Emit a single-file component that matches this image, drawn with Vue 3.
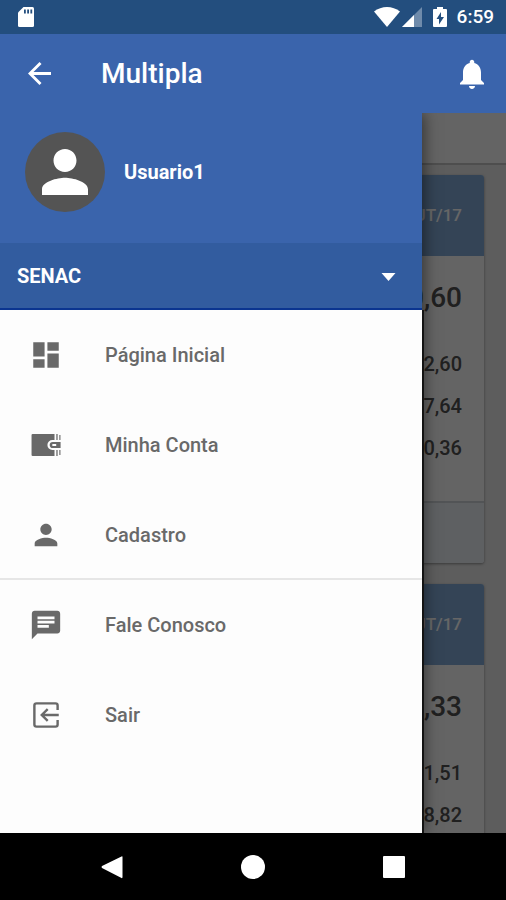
<script setup>
import { ref } from 'vue';

const company = ref('SENAC');
const companies = ['SENAC'];

// main options and, below the divider, the secondary ones
const groups = [
  [
    { label: 'Página Inicial', icon: 'dashboard' },
    { label: 'Minha Conta', icon: 'wallet' },
    { label: 'Cadastro', icon: 'person' }
  ],
  [
    { label: 'Fale Conosco', icon: 'chat' },
    { label: 'Sair', icon: 'exit' }
  ]
];

const cards = [
  { month: 'OUT/17', total: '0,60', values: ['2,60', '97,64', '00,36'] },
  { month: 'OUT/17', total: '0,33', values: ['1,51', '8,82'] }
];
</script>

<template>
  <div class="app">
    <div class="status-bar">
      <svg class="sd" viewBox="0 0 16 20" aria-hidden="true">
        <path fill="#fff" d="M5.500 0H14.500Q16 0 16 1.500V18.500Q16 20 14.500 20H1.500Q0 20 0 18.500V5.500Z" />
        <path fill="#234e7e" d="M6 2.500h1.800v4H6zM9.200 2.500H11v4H9.200zM12.400 2.500h1.800v4h-1.800z" />
      </svg>
      <div class="status-icons">
        <svg class="wifi" viewBox="0 0 26 20" aria-hidden="true">
          <path fill="#fff" d="M0 4.500C7.500-1.500 18.500-1.500 26 4.500L13 20Z" />
        </svg>
        <svg class="signal" viewBox="0 0 20 20" aria-hidden="true">
          <path fill="#fff" fill-opacity="0.35" d="M0 20L20 0V20Z" />
          <path fill="#fff" d="M0 20L12 8V20Z" />
        </svg>
        <svg class="battery" viewBox="0 0 14 20" aria-hidden="true">
          <path fill="#fff" d="M4 0h6v2h3q1 0 1 1v16q0 1-1 1H1q-1 0-1-1V3q0-1 1-1h3z" />
          <path fill="#234e7e" d="M8 5v5h3l-5 7.500V12H3.500z" />
        </svg>
        <span class="clock">6:59</span>
      </div>
    </div>

    <header class="toolbar">
      <button type="button" class="icon-button" aria-label="Voltar">
        <svg class="icon back" viewBox="4 4 16 16"><path d="M20 11H7.830l5.590-5.590L12 4l-8 8 8 8 1.410-1.410L7.830 13H20v-2z" /></svg>
      </button>
      <h1>Multipla</h1>
      <button type="button" class="icon-button" aria-label="Notificações">
        <svg class="icon bell" viewBox="0 0 24 24"><path d="M12 22c1.100 0 2-.9 2-2h-4c0 1.100.89 2 2 2zm6-6v-5c0-3.070-1.640-5.640-4.500-6.320V4c0-.83-.67-1.500-1.500-1.500s-1.500.67-1.500 1.500v.68C7.630 5.360 6 7.920 6 11v5l-2 2v1h16v-1l-2-2z" /></svg>
      </button>
    </header>

    <div class="content">
      <main class="page">
        <div class="tabs"></div>
        <section class="cards">
          <article v-for="(card, i) in cards" :key="i" class="card">
            <h2>{{ card.month }}</h2>
            <div class="card-body">
              <p class="total">{{ card.total }}</p>
              <p v-for="value in card.values" :key="value" class="value">{{ value }}</p>
            </div>
            <div class="card-footer"></div>
          </article>
        </section>
      </main>

      <div class="scrim"></div>

      <aside class="drawer">
        <div class="user">
          <span class="avatar">
            <svg viewBox="4 4 16 16" aria-hidden="true"><path d="M12 12c2.210 0 4-1.790 4-4s-1.790-4-4-4-4 1.790-4 4 1.790 4 4 4zm0 2c-2.670 0-8 1.340-8 4v2h16v-2c0-2.660-5.330-4-8-4z" /></svg>
          </span>
          <span class="user-name">Usuario1</span>
        </div>
        <div class="company">
          <select v-model="company" aria-label="Empresa">
            <option v-for="item in companies" :key="item">{{ item }}</option>
          </select>
          <svg class="caret" viewBox="0 0 14 8" aria-hidden="true"><path d="M0 0h14L7 8z" /></svg>
        </div>
        <nav class="menu">
          <ul v-for="(items, g) in groups" :key="g">
            <li v-for="item in items" :key="item.label">
              <a href="#">
                <svg class="icon" viewBox="0 0 24 24" aria-hidden="true">
                  <path v-if="item.icon === 'dashboard'" d="M3 13h8V3H3v10zm0 8h8v-6H3v6zm10 0h8V11h-8v10zm0-18v6h8V3h-8z" />
                  <g v-else-if="item.icon === 'wallet'">
                    <path d="M2.600 4.200H18V8.500H16.500a3.500 3.500 0 0 0 0 7H18V19.800H2.600Q1.800 19.800 1.800 19V5Q1.800 4.200 2.600 4.200z" />
                    <path fill-rule="evenodd" d="M16.800 9.800H22.300V14.200H16.800a2.200 2.200 0 0 1 0-4.400zM17 11.300a.7.7 0 0 0 0 1.400h2.200v-1.400z" />
                    <path d="M19.300 4.200H20.200V8.500H19.300zM21.400 5h.8v3.500h-.8zM19.300 15.500H20.200V19.800H19.300zM21.400 15.500h.8V19h-.8z" />
                  </g>
                  <path v-else-if="item.icon === 'person'" d="M12 12c2.210 0 4-1.790 4-4s-1.790-4-4-4-4 1.790-4 4 1.790 4 4 4zm0 2c-2.670 0-8 1.340-8 4v2h16v-2c0-2.660-5.330-4-8-4z" />
                  <path v-else-if="item.icon === 'chat'" d="M20 2H4c-1.100 0-1.990.9-1.990 2L2 22l4-4h14c1.100 0 2-.9 2-2V4c0-1.100-.9-2-2-2zM6 9h12v2H6V9zm8 5H6v-2h8v2zm4-6H6V6h12v2z" />
                  <g v-else fill="none" stroke="currentColor" stroke-width="1.700">
                    <path d="M20.200 8.500V5.300Q20.200 3.800 18.700 3.800H5.300Q3.800 3.800 3.800 5.300V18.700Q3.800 20.200 5.300 20.200H18.700Q20.200 20.200 20.200 18.700V15.500" />
                    <path d="M21 12H9.200M13.200 7.800L9 12L13.200 16.200" />
                  </g>
                </svg>
                <span>{{ item.label }}</span>
              </a>
            </li>
          </ul>
        </nav>
      </aside>
    </div>

    <footer class="nav-bar">
      <button type="button" aria-label="Voltar">
        <svg viewBox="0 0 24 24"><path d="M21.500 1.500Q22.500 1 22.500 2V22Q22.500 23.500 21.500 23L2 13Q1 12 2 11z" /></svg>
      </button>
      <button type="button" aria-label="Início">
        <svg viewBox="0 0 24 24"><circle cx="12" cy="12" r="12" /></svg>
      </button>
      <button type="button" aria-label="Recentes">
        <svg viewBox="0 0 24 24"><rect x="1" y="1" width="22" height="22" rx="1" /></svg>
      </button>
    </footer>
  </div>
</template>

<style>
body {
  margin: 0;
  background: #000;
}
</style>

<style scoped>
* {
  margin: 0;
  padding: 0;
  box-sizing: border-box;
}

.app {
  display: flex;
  flex-direction: column;
  height: 100vh;
  font-family: Roboto, 'Liberation Sans', sans-serif;
}

svg {
  display: block;
  flex: none;
}

button {
  display: flex;
  align-items: center;
  justify-content: center;
  border: none;
  background: none;
  cursor: pointer;
}

.icon {
  width: 34px;
  height: 34px;
  fill: currentColor;
}

/* barra de estado */
.status-bar {
  display: flex;
  flex: none;
  align-items: center;
  justify-content: space-between;
  height: 34px;
  padding: 0 12px 0 18px;
  color: #fff;
  background: #234e7e;
}

.sd {
  width: 16px;
  height: 20px;
}

.status-icons {
  display: flex;
  align-items: center;
}

.wifi {
  width: 26px;
  height: 20px;
}

.signal {
  width: 20px;
  height: 20px;
  margin-left: 2px;
}

.battery {
  width: 14px;
  height: 20px;
  margin: 0 10px 0 11px;
}

.clock {
  font-size: 19px;
  font-weight: 500;
  line-height: 34px;
}

.toolbar {
  display: flex;
  flex: none;
  align-items: center;
  height: 79px;
  padding: 0 10px 0 15px;
  color: #fff;
  background: #3a64ac;
}

.toolbar h1 {
  flex: 1;
  margin-left: 38px;
  font-size: 28px;
  font-weight: 500;
  line-height: 32px;
}

.icon-button {
  width: 48px;
  height: 48px;
  color: #fff;
}

.icon.back {
  width: 23px;
  height: 23px;
}

.icon.bell {
  width: 36px;
  height: 36px;
}

.content {
  position: relative;
  flex: 1;
  min-height: 0;
  overflow: hidden;
}

.page {
  height: 100%;
  overflow: hidden;
  background: #e8e8e8;
}

.tabs {
  height: 52px;
  background: #fafafa;
  border-bottom: 2px solid #c4c4c4;
}

.cards {
  display: flex;
  flex-direction: column;
  gap: 21px;
  padding: 10px 22px;
}

.card {
  overflow: hidden;
  text-align: right;
  color: #505050;
  background: #fafafa;
  border-radius: 3px;
  box-shadow: 0 1px 3px rgba(0, 0, 0, 0.4);
}

.card h2 {
  padding: 0 22px;
  font-size: 17px;
  font-weight: 500;
  line-height: 81px;
  color: #fff;
  background: #82aad8;
}

.card-body {
  padding: 21px 22px 32px;
}

.total {
  margin-bottom: 24px;
  font-size: 28px;
  font-weight: 500;
  line-height: 42px;
}

.value {
  font-size: 20px;
  font-weight: 500;
  line-height: 42px;
}

.card-footer {
  height: 62px;
  background: #eaf0f6;
  border-top: 2px solid #ccd2d8;
}

.scrim {
  position: absolute;
  inset: 0;
  background: rgba(0, 0, 0, 0.6);
}

/* menu lateral que cubre la página */
.drawer {
  position: absolute;
  top: 0;
  bottom: 0;
  left: 0;
  display: flex;
  flex-direction: column;
  width: calc(100% - 84px);
  box-shadow: 2px 0 14px rgba(0, 0, 0, 0.5);
}

.user {
  display: flex;
  align-items: center;
  gap: 19px;
  height: 130px;
  padding: 0 25px 12px;
  color: #fff;
  background: #3a64ac;
}

.avatar {
  display: flex;
  align-items: center;
  justify-content: center;
  width: 80px;
  height: 80px;
  border-radius: 50%;
  background: #545454;
}

.avatar svg {
  width: 46px;
  height: 46px;
  fill: #fff;
}

.user-name {
  font-size: 20px;
  font-weight: 700;
  line-height: 24px;
}

.company {
  position: relative;
  height: 67px;
  background: #325c9f;
  border-bottom: 2px solid #0b3590;
}

.company select {
  width: 100%;
  height: 100%;
  padding: 0 17px;
  appearance: none;
  border: none;
  color: #fff;
  background: none;
  font-family: inherit;
  font-size: 20px;
  font-weight: 700;
}

.caret {
  position: absolute;
  top: 30px;
  right: 26px;
  width: 15px;
  height: 8px;
  fill: #fff;
  pointer-events: none;
}

.menu {
  flex: 1;
  min-height: 0;
  background: #fdfdfd;
  box-shadow: 2px 0 0 #141414;
}

.menu ul {
  list-style: none;
}

.menu ul + ul {
  box-shadow: 0 -2px 0 #e6e6e6;
}

.menu a {
  display: flex;
  align-items: center;
  gap: 42px;
  height: 90px;
  padding: 0 29px;
  font-size: 20px;
  font-weight: 500;
  color: #696969;
  text-decoration: none;
}

.nav-bar {
  display: flex;
  flex: none;
  justify-content: center;
  gap: 93px;
  height: 67px;
  background: #000;
}

.nav-bar button {
  width: 48px;
}

.nav-bar svg {
  width: 24px;
  height: 24px;
  fill: #fff;
}
</style>
